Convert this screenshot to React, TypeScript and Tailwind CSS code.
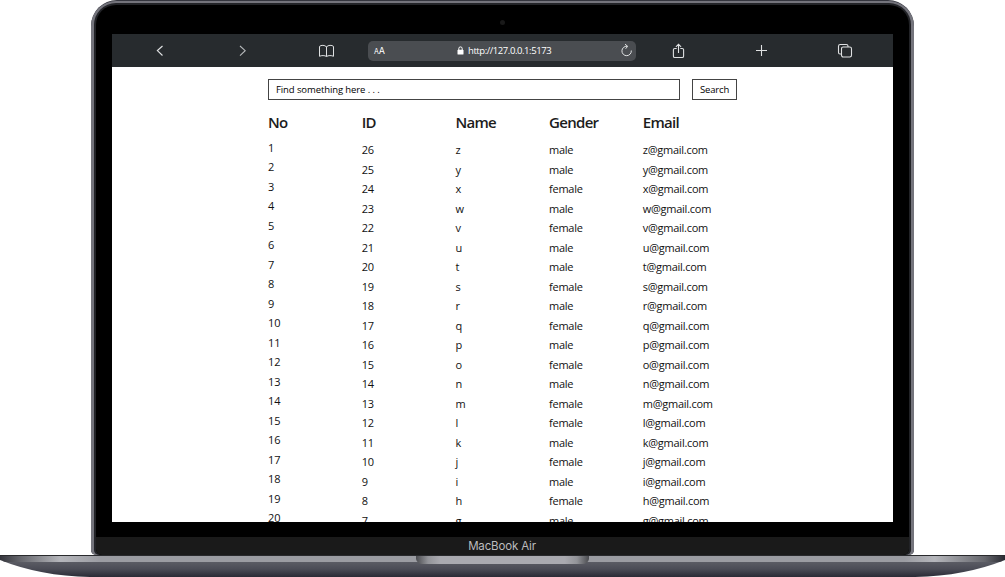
import React from "react";

const LETTERS = "zyxwvutsrqponmlkjihg".split("");
const FEMALE = new Set(["x", "v", "s", "q", "o", "m", "l", "j", "h"]);

function Toolbar() {
  return (
    <div className="flex h-[33px] shrink-0 items-center bg-[#272b2e] text-[#dfe1e2]">
      <svg className="ml-[40px] size-4" viewBox="0 0 16 16" fill="none" stroke="currentColor" strokeWidth="1.2">
        <path d="M10.5 3 5.4 7.6l5.1 4.9" />
      </svg>
      <svg className="ml-[66px] size-4 text-[#b5b8ba]" viewBox="0 0 16 16" fill="none" stroke="currentColor" strokeWidth="1.1">
        <path d="m6 3 5.2 4.7L6 12.7" />
      </svg>
      <svg className="ml-[68px] h-4 w-4" viewBox="0 0 16 16" fill="none" stroke="currentColor" strokeWidth="1">
        <path d="M8.5 3.5v10M8.5 3.9C6.9 1.9 3 1.9 1.5 3.4v9.9c1.8-1 5.4-1 7 .2 1.6-1.2 5.2-1.2 7-.2V3.4C14 1.9 10.1 1.9 8.5 3.9" />
      </svg>
      <div className="ml-[34px] flex h-5 w-[268px] items-center rounded-[5px] bg-[#4a4d51] font-['Open_Sans',sans-serif] text-white">
        <div className="ml-[6px] flex w-[12px] items-baseline font-['Inter',sans-serif] leading-none">
          <span className="text-[7px]">A</span>
          <span className="text-[9px]">A</span>
        </div>
        <svg className="ml-[71px] h-[9px] w-[7px]" viewBox="0 0 7 9">
          <path d="M1.8 4V2.6a1.7 1.7 0 0 1 3.4 0V4" fill="none" stroke="white" />
          <rect x=".5" y="3.8" width="6" height="4.8" rx=".7" fill="white" />
        </svg>
        <span className="ml-[4px] w-[84px] whitespace-nowrap text-[9.5px] leading-4 tracking-[-0.43px]">http://127.0.0.1:5173</span>
        <svg className="ml-[68px] h-[14px] w-[13px]" viewBox="0 0 13 14" fill="none" stroke="#dfe1e2" strokeWidth="1">
          <path d="M11.3 6.5a4.7 4.7 0 1 1-4.2-4.2M5 .2l2.7 2.1L5.6 4.8" />
        </svg>
      </div>
      <svg className="ml-[35px] h-4 w-4" viewBox="0 0 16 16" fill="none" stroke="currentColor" strokeWidth="1.1">
        <path d="M5.7 5.5H3.8q-1.4 0-1.4 1.3v6.4q0 1.3 1.4 1.3h7.4q1.4 0 1.4-1.3V6.8q0-1.3-1.4-1.3H9.3M7.5 10V1.3M4.9 3.8l2.6-2.6 2.6 2.6" />
      </svg>
      <svg className="ml-[67px] h-4 w-4" viewBox="0 0 16 16" fill="none" stroke="currentColor" strokeWidth="1.1">
        <path d="M7.5 2v11M2 7.5h11" />
      </svg>
      <svg className="ml-[67px] h-4 w-4" viewBox="0 0 16 16" fill="none" stroke="currentColor" strokeWidth="1.1">
        <rect x="4.5" y="4" width="10" height="10" rx="1.7" />
        <path d="M4.5 11H3q-1.5 0-1.5-1.5V3.2q0-1.7 1.7-1.7h6.1q1.7 0 1.7 1.5v1" />
      </svg>
    </div>
  );
}

function Column({ title, items, first }: { title: string; items: string[]; first?: boolean }) {
  return (
    <div className="w-[93.7px] shrink-0">
      <h2 className="h-[26.6px] text-[15px] leading-[22px] font-semibold tracking-[-0.7px] text-[#1c1c1c]">{title}</h2>
      <ul className={first ? "" : "pt-[2.6px] tracking-[-0.26px]"}>
        {items.map((item, i) => (
          <li key={i} className="h-[19.53px] text-[11px] leading-[19.53px] whitespace-nowrap text-[#111]">
            {item}
          </li>
        ))}
      </ul>
    </div>
  );
}

function Page() {
  return (
    <div className="min-h-0 grow overflow-hidden bg-white pt-[12px] pl-[156px] font-['Open_Sans',sans-serif] text-black">
      <div className="flex gap-[12px] text-[9.5px]">
        <div className="flex h-[21px] w-[412px] items-center border border-[#444] pt-px pl-[7px] tracking-[-0.1px]">Find something here . . .</div>
        <button className="h-[21px] w-[45px] border border-[#444] leading-[18px] tracking-[-0.15px]">Search</button>
      </div>
      <div className="mt-[11px] flex">
        <Column title="No" items={LETTERS.map((_, i) => String(i + 1))} first />
        <Column title="ID" items={LETTERS.map((_, i) => String(26 - i))} />
        <Column title="Name" items={LETTERS} />
        <Column title="Gender" items={LETTERS.map((l) => (FEMALE.has(l) ? "female" : "male"))} />
        <Column title="Email" items={LETTERS.map((l) => `${l}@gmail.com`)} />
      </div>
    </div>
  );
}

function Base() {
  return (
    <svg className="block h-[22px] w-[1005px] shrink-0" viewBox="0 0 1005 22">
      <defs>
        <linearGradient id="body" x2="0" y2="1">
          <stop offset="0" stopColor="#5d5e66" />
          <stop offset=".5" stopColor="#4b4c56" />
          <stop offset="1" stopColor="#292a35" />
        </linearGradient>
        <linearGradient id="edge">
          <stop offset="0" stopColor="#34353c" />
          <stop offset=".02" stopColor="#65666c" />
          <stop offset=".06" stopColor="#b5b6bb" />
          <stop offset=".1" stopColor="#9b9ca2" />
          <stop offset=".9" stopColor="#9b9ca2" />
          <stop offset=".93" stopColor="#b5b6bb" />
          <stop offset=".98" stopColor="#65666c" />
          <stop offset="1" stopColor="#292a31" />
        </linearGradient>
        <linearGradient id="notch">
          <stop offset="0" stopColor="#4b4c50" />
          <stop offset=".07" stopColor="#939499" />
          <stop offset=".14" stopColor="#aaaab0" />
          <stop offset=".86" stopColor="#aaaab0" />
          <stop offset=".93" stopColor="#939499" />
          <stop offset="1" stopColor="#4b4c50" />
        </linearGradient>
        <clipPath id="shape">
          <path d="M0 0H1005V5Q965 21 915 22H90Q40 21 0 5Z" />
        </clipPath>
      </defs>
      <g clipPath="url(#shape)">
        <rect y="6" width="1005" height="16" fill="url(#body)" />
        <rect width="1005" height="7" fill="url(#edge)" />
        <rect width="1005" height="1" fill="#292a2d" />
      </g>
      <path d="M416 1H589V4Q588 9 582 9H423Q417 9 416 4Z" fill="url(#notch)" />
    </svg>
  );
}

export default function App() {
  return (
    <main className="flex h-[577px] w-[1005px] flex-col overflow-hidden bg-white">
      <div className="ml-[91px] flex h-[555px] w-[823px] rounded-t-[26px] rounded-b-[5px] bg-[#34353e] pt-px">
        <div className="flex grow rounded-t-[25px] rounded-b-[5px] bg-[#74747c] px-[3px] pt-[2px]">
          <div className="flex grow rounded-t-[22px] rounded-b-[5px] bg-[#222327] px-[2px] pt-[2px]">
            <div className="flex grow flex-col overflow-hidden rounded-t-[20px] rounded-b-[6px] bg-black">
              <div className="flex h-[29px] shrink-0 items-center justify-center">
                <span className="mt-[5px] size-[5px] rounded-full bg-[#191919]" />
              </div>
              <div className="ml-[16px] flex h-[488px] w-[781px] shrink-0 flex-col overflow-hidden">
                <Toolbar />
                <Page />
              </div>
              <div className="mt-[15px] flex grow items-center justify-center bg-[#1a1a1a] pt-px pr-px font-['Inter',sans-serif] text-[11.5px] tracking-[-0.15px] text-[#bcbcbf]">
                MacBook Air
              </div>
            </div>
          </div>
        </div>
      </div>
      <Base />
    </main>
  );
}
